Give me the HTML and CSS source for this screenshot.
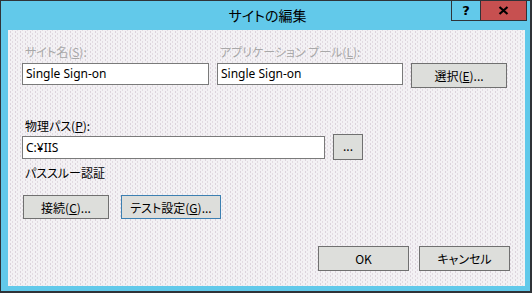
FILE: index.html
```html
<!DOCTYPE html>
<html lang="ja">
<head>
<meta charset="utf-8">
<title>サイトの編集</title>
<link rel="stylesheet" href="styles.css">
</head>
<body>
<div class="window">
  <div class="titlebar">
    <div class="title">サイトの編集</div>
    <div class="controls">
      <div class="ctl help">?</div>
      <div class="ctl close">
        <svg width="11" height="9" viewBox="0 0 11 9"><path d="M1.5 1 L9.5 8 M9.5 1 L1.5 8" stroke="#000" stroke-width="2.2" fill="none"/></svg>
      </div>
    </div>
  </div>
  <div class="frame">
    <div class="client">
      <div class="row1">
        <div class="field f1">
          <div class="label disabled">サイト名(<u>S</u>):</div>
          <div class="input">Single Sign-on</div>
        </div>
        <div class="field f2">
          <div class="label disabled">アプリケーション プール(<u>L</u>):</div>
          <div class="input">Single Sign-on</div>
        </div>
        <div class="btn select">選択(<u>E</u>)...</div>
      </div>
      <div class="label path-label">物理パス(<u>P</u>):</div>
      <div class="row2">
        <div class="input path">C:¥IIS</div>
        <div class="btn browse">...</div>
      </div>
      <div class="label passthru">パススルー認証</div>
      <div class="row3">
        <div class="btn connect">接続(<u>C</u>)...</div>
        <div class="btn test">テスト設定(<u>G</u>)...</div>
      </div>
      <div class="row4">
        <div class="btn ok">OK</div>
        <div class="btn cancel">キャンセル</div>
      </div>
    </div>
  </div>
</div>
</body>
</html>
```

FILE: styles.css
```css
html, body {
  margin: 0;
  padding: 0;
  background: #62c9ea;
}
body {
  font-family: "Noto Sans CJK JP", "Noto Sans", sans-serif;
  font-size: 12px;
  font-feature-settings: "palt";
  color: #000;
}
.window {
  width: 532px;
  height: 293px;
  box-sizing: border-box;
  background: #62c9ea;
  border-style: solid;
  border-color: #2f3338;
  border-width: 1px 2px 2px 1px;
  display: flex;
  flex-direction: column;
}
.titlebar {
  position: relative;
  height: 29px;
  flex: none;
}
.title {
  text-align: center;
  font-size: 14px;
  line-height: 28px;
  padding-left: 4px;
  color: #000;
}
.controls {
  position: absolute;
  top: -1px;
  right: 3px;
  display: flex;
}
.ctl {
  box-sizing: border-box;
  height: 21px;
  border: 1px solid #2f3338;
  display: flex;
  align-items: center;
  justify-content: center;
}
.help {
  width: 29px;
  border-right: none;
  font-family: "DejaVu Sans", sans-serif;
  font-weight: bold;
  font-size: 13px;
}
.close {
  width: 47px;
  background: #c75050;
}
.frame {
  flex: 1;
  padding: 0 5px 5px 7px;
  display: flex;
}
.client {
  flex: 1;
  background-color: #f3f1f4;
  background-image:
    radial-gradient(circle, #dcd3dc 0.55px, transparent 0.75px),
    radial-gradient(circle, #e2dbe2 0.55px, transparent 0.75px);
  background-size: 5px 4px, 5px 4px;
  background-position: 0 0, 2px 2px;
  padding: 13px 15px 0 14px;
  display: flex;
  flex-direction: column;
}
.label {
  line-height: 17px;
  height: 17px;
  padding-left: 3px;
  white-space: nowrap;
}
.label u {
  text-underline-offset: 1px;
}
.disabled {
  color: #a8a8a8;
}
.row1 {
  display: flex;
  align-items: flex-start;
}
.field .label {
  margin-bottom: 3px;
}
.f1 { width: 187px; }
.f2 { width: 186px; margin-left: 8px; }
.input {
  box-sizing: border-box;
  height: 22px;
  border: 1px solid #7a7a7a;
  background: #fff;
  padding-left: 3px;
  line-height: 20px;
  font-family: "Noto Sans", "Noto Sans CJK JP", sans-serif;
  font-size: 12px;
  white-space: nowrap;
  overflow: hidden;
}
.btn {
  box-sizing: border-box;
  border: 1px solid #707070;
  background: #dddedb;
  display: flex;
  align-items: center;
  justify-content: center;
  white-space: nowrap;
  line-height: 17px;
}
.btn u { text-underline-offset: 1px; }
.select {
  width: 96px;
  height: 25px;
  margin-left: 8px;
  margin-top: 20px;
}
.path-label {
  margin-top: 29px;
  margin-bottom: 2px;
}
.row2 {
  display: flex;
  align-items: flex-start;
}
.path {
  width: 303px;
  height: 23px;
  line-height: 21px;
}
.browse {
  width: 30px;
  height: 26px;
  margin-left: 8px;
  margin-top: -2px;
  padding-bottom: 3px;
}
.passthru {
  margin-top: 4px;
}
.row3 {
  display: flex;
  margin-top: 14px;
  padding-left: 1px;
}
.connect {
  width: 86px;
  height: 24px;
}
.test {
  width: 100px;
  height: 24px;
  margin-left: 12px;
  border-color: #3c7fb1;
}
.row4 {
  display: flex;
  justify-content: flex-end;
  margin-top: 27px;
}
.ok, .cancel {
  width: 91px;
  height: 25px;
}
.cancel {
  margin-left: 10px;
}
```
